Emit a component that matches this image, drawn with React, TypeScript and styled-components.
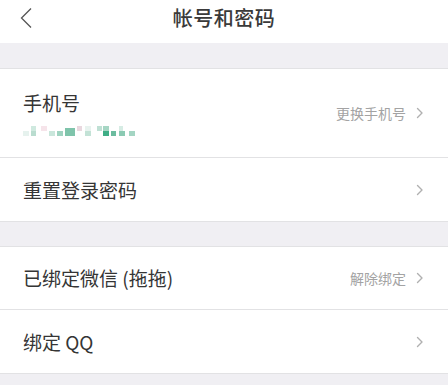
import styled, { createGlobalStyle } from "styled-components"

const GlobalStyle = createGlobalStyle`
    html, body {
        margin: 0;
        padding: 0;
        background: #f0eff3;
        font-family: "Noto Sans CJK SC", "Noto Sans", sans-serif;
    }
`

const Page = styled.div`
    width: 448px;
    min-height: 385px;
    background: #f0eff3;
`

const NavBar = styled.header`
    position: relative;
    height: 43px;
    background: #fff;
    display: flex;
    align-items: center;
    justify-content: center;
`

const Back = styled.button`
    position: absolute;
    left: 14px;
    top: 5px;
    width: 24px;
    height: 26px;
    border: 0;
    padding: 0;
    background: none;
    display: flex;
    align-items: center;
    justify-content: center;
`

const Title = styled.h1`
    margin: 0;
    font-size: 20px;
    font-weight: 500;
    color: #3a3a3a;
    letter-spacing: 0.5px;
    transform: translateY(-4px);
`

const Group = styled.section<{ $gap: number }>`
    margin-top: ${p => p.$gap}px;
    background: #fff;
    border-top: 1px solid #e2e2e4;
    border-bottom: 1px solid #e2e2e4;
`

const Row = styled.div<{ $height: number }>`
    height: ${p => p.$height}px;
    display: flex;
    align-items: center;
    padding: 0 24px 0 23px;
    & + & {
        border-top: 1px solid #e2e2e4;
    }
`

const Main = styled.div`
    flex: 1;
    display: flex;
    flex-direction: column;
    gap: 11px;
`

const Label = styled.span`
    font-size: 19px;
    color: #353535;
    line-height: 24px;
`

const Extra = styled.span`
    font-size: 14px;
    color: #a3a3a3;
    margin-right: 10px;
`

const Chevron = () => (
    <svg width="8" height="12" viewBox="0 0 8 12">
        <path d="M1.5 1.5 L6 6 L1.5 10.5" fill="none" stroke="#b0b0b0" strokeWidth="1.4" strokeLinecap="round" strokeLinejoin="round" />
    </svg>
)

const mosaic: [number, number, number, number, string][] = [
    [0, 5, 6, 5, "#e6f2ee"],
    [8, 0, 5, 5, "#cfe9df"],
    [8, 5, 5, 5, "#b9dccf"],
    [18, 0, 6, 5, "#f6e4ea"],
    [26, 5, 6, 5, "#c9e6db"],
    [34, 5, 6, 5, "#9fd3c0"],
    [42, 2, 10, 8, "#7fc4ab"],
    [54, 0, 5, 5, "#e9d8df"],
    [62, 0, 6, 5, "#e8f3ef"],
    [62, 5, 6, 5, "#c3e2d6"],
    [74, 0, 5, 5, "#bfe0d4"],
    [80, 5, 6, 5, "#3fae86"],
    [80, 0, 6, 5, "#a6d6c4"],
    [88, 5, 5, 5, "#6cbc9f"],
    [96, 0, 4, 5, "#d6ece4"],
    [96, 5, 6, 5, "#8bcab3"],
    [106, 5, 6, 5, "#a4d5c3"],
]

const PhoneMask = () => (
    <svg width="114" height="10" viewBox="0 0 114 10">
        {mosaic.map(([x, y, w, h, c], i) => (
            <rect key={i} x={x} y={y} width={w} height={h} fill={c} />
        ))}
    </svg>
)

const App = () => {
    return (
        <Page>
            <GlobalStyle />
            <NavBar>
                <Back aria-label="返回">
                    <svg width="14" height="22" viewBox="0 0 14 22">
                        <path d="M12 1.5 L2.5 11 L12 20.5" fill="none" stroke="#555" strokeWidth="1.3" />
                    </svg>
                </Back>
                <Title>帐号和密码</Title>
            </NavBar>

            <Group $gap={25}>
                <Row $height={88}>
                    <Main>
                        <Label>手机号</Label>
                        <PhoneMask />
                    </Main>
                    <Extra>更换手机号</Extra>
                    <Chevron />
                </Row>
                <Row $height={63}>
                    <Main>
                        <Label>重置登录密码</Label>
                    </Main>
                    <Chevron />
                </Row>
            </Group>

            <Group $gap={24}>
                <Row $height={62}>
                    <Main>
                        <Label>已绑定微信 (拖拖)</Label>
                    </Main>
                    <Extra>解除绑定</Extra>
                    <Chevron />
                </Row>
                <Row $height={63}>
                    <Main>
                        <Label>绑定 QQ</Label>
                    </Main>
                    <Chevron />
                </Row>
            </Group>
        </Page>
    )
}

export default App
